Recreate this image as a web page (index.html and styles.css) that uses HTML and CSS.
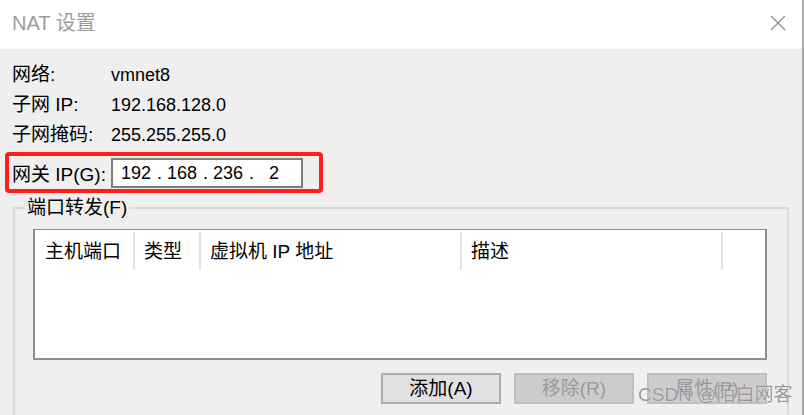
FILE: index.html
```html
<!DOCTYPE html>
<html lang="zh-CN">
<head>
<meta charset="utf-8">
<title>NAT 设置</title>
<link rel="stylesheet" href="styles.css">
</head>
<body>
<div class="window">
  <header class="titlebar">
    <span class="title">NAT 设置</span>
    <svg class="close" width="16" height="16" viewBox="0 0 16 16" aria-hidden="true">
      <path d="M1 1 L15 15 M15 1 L1 15" stroke="#8a8a8a" stroke-width="1.2" fill="none"/>
    </svg>
  </header>
  <main class="content">
    <div class="info">
      <div class="row"><span class="label">网络:</span><span class="value">vmnet8</span></div>
      <div class="row"><span class="label">子网 IP:</span><span class="value">192.168.128.0</span></div>
      <div class="row"><span class="label">子网掩码:</span><span class="value">255.255.255.0</span></div>
      <div class="gateway">
        <span class="label">网关 IP(G):</span>
        <div class="ipbox">
          <span class="oct">192</span><span class="dot">.</span><span class="oct">168</span><span class="dot">.</span><span class="oct">236</span><span class="dot">.</span><span class="oct">2</span>
        </div>
      </div>
    </div>
    <fieldset class="group">
      <legend class="legend">端口转发(F)</legend>
      <div class="list">
        <div class="list-head">
          <div class="col c1">主机端口</div>
          <div class="col c2">类型</div>
          <div class="col c3">虚拟机 IP 地址</div>
          <div class="col c4">描述</div>
        </div>
      </div>
      <div class="buttons">
        <button class="btn">添加(A)</button>
        <button class="btn disabled">移除(R)</button>
        <button class="btn disabled">属性(P)</button>
      </div>
    </fieldset>
  </main>
  <div class="watermark">CSDN @陌白网客</div>
</div>
</body>
</html>
```

FILE: styles.css
```css
html, body {
  margin: 0;
  padding: 0;
}
body {
  width: 804px;
  height: 415px;
  overflow: hidden;
  background: #efefef;
  font-family: "Liberation Sans", "Noto Sans CJK SC", sans-serif;
  color: #000;
}
.window {
  position: relative;
  width: 802px;
  height: 415px;
  border-right: 2px solid #a8a8a8;
  background: #efefef;
  display: flex;
  flex-direction: column;
}
.titlebar {
  height: 49px;
  flex: none;
  background: #fff;
  display: flex;
  align-items: center;
  justify-content: space-between;
  padding: 0 16px 3px 12px;
  box-sizing: border-box;
}
.title {
  font-size: 20px;
  color: #9c9c9c;
  line-height: 24px;
}
.close {
  display: block;
}
.content {
  flex: 1;
  display: flex;
  flex-direction: column;
}
.info {
  padding-top: 11px;
}
.row {
  display: flex;
  height: 30px;
  line-height: 30px;
  font-size: 19px;
  padding-left: 12px;
}
.label {
  width: 99px;
  flex: none;
}
.value {
  font-size: 18px;
}
.gateway {
  margin: 2px 0 0 5px;
  width: 318px;
  height: 41px;
  box-sizing: border-box;
  border: 4px solid #ff1f1a;
  border-radius: 4px;
  display: flex;
  align-items: center;
  padding-left: 3px;
  font-size: 19px;
}
.ipbox {
  width: 192px;
  height: 30px;
  box-sizing: border-box;
  border: 2px solid #7d7d7d;
  background: #fff;
  display: flex;
  align-items: center;
  padding-left: 2px;
  font-size: 18px;
  line-height: 26px;
}
.oct {
  width: 42px;
  text-align: center;
}
.dot {
  width: 4px;
  text-align: center;
}
.group {
  margin: 5px 0 0 13px;
  width: 776px;
  box-sizing: border-box;
  border: 2px solid #dadada;
  border-bottom: none;
  padding: 0;
  min-width: 0;
  flex: 1;
}
.legend {
  margin-left: 10px;
  padding: 0 2px;
  font-size: 19px;
  line-height: 20px;
}
.list {
  margin: 11px 20px 0 18px;
  height: 131px;
  box-sizing: border-box;
  border: 2px solid #8a8d94;
  border-top-width: 1px;
  background: #fff;
}
.list-head {
  display: flex;
  padding-top: 2px;
}
.col {
  height: 38px;
  line-height: 40px;
  box-sizing: border-box;
  border-right: 2px solid #e3e3e3;
  padding-left: 9px;
  font-size: 19px;
  white-space: nowrap;
}
.c1 { width: 100px; padding-left: 10px; }
.c2 { width: 66px; }
.c3 { width: 261px; }
.c4 { width: 261px; }
.buttons {
  display: flex;
  justify-content: flex-end;
  gap: 13px;
  margin: 13px 20px 0 0;
}
.btn {
  width: 120px;
  height: 31px;
  box-sizing: border-box;
  border: 2px solid #adadad;
  background: #e1e1e1;
  font-family: "Liberation Sans", "Noto Sans CJK SC", sans-serif;
  font-size: 19px;
  line-height: 25px;
  color: #000;
  padding: 0;
  margin: 0;
}
.btn.disabled {
  background: #cccccc;
  border-color: #bfbfbf;
  color: #9a9a9a;
}
.watermark {
  position: absolute;
  left: 638px;
  top: 384px;
  font-size: 19px;
  line-height: 22px;
  color: rgba(135, 135, 135, 0.85);
  text-shadow: 0 0 1px rgba(255, 255, 255, 0.9);
  white-space: nowrap;
}
```
